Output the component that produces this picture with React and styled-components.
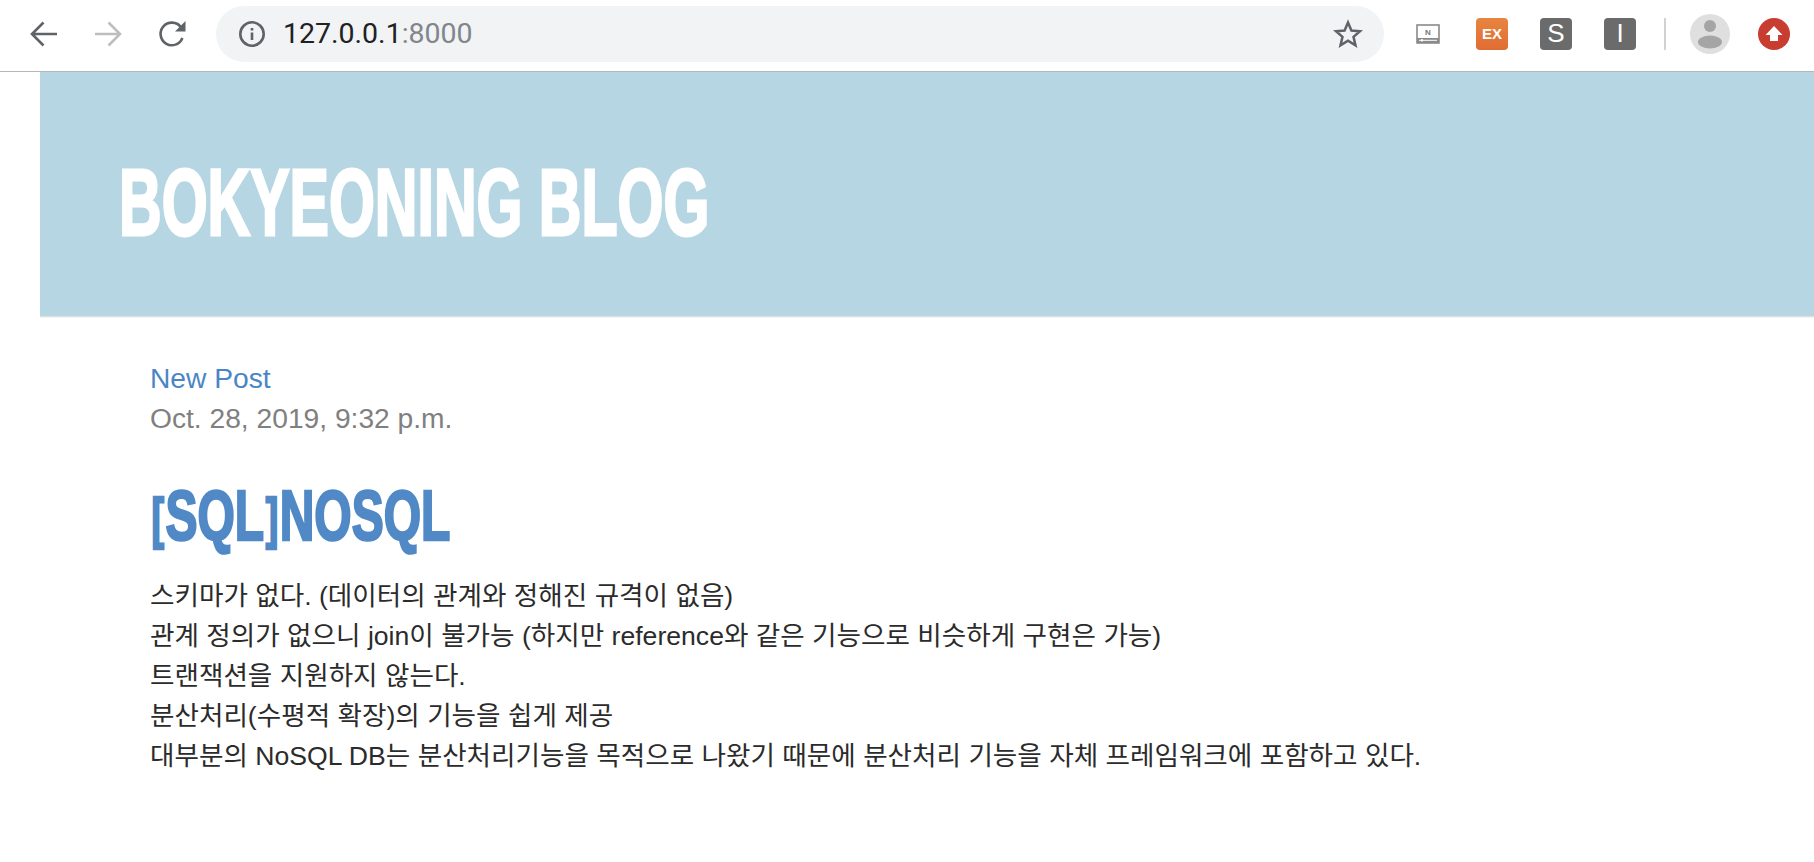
import React from "react";
import styled, { createGlobalStyle, css } from "styled-components";

const GlobalStyle = createGlobalStyle`
	html, body {
		margin: 0;
		padding: 0;
		background: #fff;
	}
	* {
		box-sizing: border-box;
	}
`;

const Toolbar = styled.div`
	height: 72px;
	display: flex;
	align-items: center;
	padding: 0 24px 4px 30px;
	border-bottom: 1px solid #b4b8ba;
	background: #fff;
`;
const NavButton = styled.button`
	width: 28px;
	height: 28px;
	margin-right: 36px;
	padding: 0;
	border: 0;
	background: none;
	display: flex;
	align-items: center;
	justify-content: center;
	flex-shrink: 0;
	color: ${(p) => (p.$disabled ? "#bcbec0" : "#5f6368")};
`;
const UrlBar = styled.div`
	width: 1168px;
	height: 56px;
	flex-shrink: 0;
	margin-left: -6px;
	margin-right: 12px;
	padding: 0 21px 0 22px;
	border-radius: 28px;
	background: #f1f3f4;
	display: flex;
	align-items: center;
`;
const UrlText = styled.div`
	flex: 1;
	margin-left: 17px;
	font: 28.5px "Roboto", "Liberation Sans", sans-serif;
	color: #202124;
`;
const UrlPort = styled.span`
	color: #80868b;
`;
const Extensions = styled.div`
	display: flex;
	align-items: center;
`;
const ExtSlot = styled.div`
	width: 64px;
	display: flex;
	justify-content: center;
`;
const Badge = styled.div`
	width: 32px;
	height: 32px;
	border-radius: 4px;
	background: ${(p) => p.$bg};
	color: #fff;
	display: flex;
	align-items: center;
	justify-content: center;
	font: ${(p) => p.$weight || 400} ${(p) => p.$size || 26}px "Liberation Sans", sans-serif;
`;
const Divider = styled.div`
	width: 2px;
	height: 32px;
	margin: 0 24px 0 12px;
	background: #d0d2d4;
`;
const Avatar = styled.div`
	width: 40px;
	height: 40px;
	margin-right: 28px;
`;

const Header = styled.header`
	height: 245px;
	margin-left: 40px;
	padding: 18px 0 0 79px;
	background: #b5d6e2;
	display: flex;
	align-items: center;
	border-bottom: 1px solid #e0e2e3;
	box-shadow: 0 1px 0 #f2f2f2;
`;

const display = css`
	margin: 0;
	display: block;
	font-family: "Liberation Sans Narrow", "Liberation Sans", sans-serif;
	font-weight: 700;
	text-transform: uppercase;
	white-space: nowrap;
	transform-origin: left center;
`;
const BlogTitle = styled.h1`
	${display}
	font-size: 94px;
	line-height: 100px;
	color: #fff;
	transform: scaleX(0.628);
	-webkit-text-stroke: 3px #fff;
`;
const Main = styled.main`
	padding: 41px 0 0 150px;
`;
const PostLink = styled.a`
	display: block;
	font: 28.2px/40px "Liberation Sans", sans-serif;
	color: #4a86c5;
`;
const PostDate = styled.div`
	font: 28.2px/40px "Liberation Sans", sans-serif;
	color: #808080;
`;
const PostTitle = styled.h2`
	${display}
	margin-top: 43px;
	margin-bottom: 22px;
	font-size: 70px;
	line-height: 70px;
	color: #5089c6;
	transform: scaleX(0.686);
	-webkit-text-stroke: 2.5px #5089c6;
`;
const Bracket = styled.span`
	font-size: 0.78em;
	vertical-align: 0.06em;
	margin: 0 0.04em;
`;
const PostBody = styled.div`
	font: 26.6px/40px "Liberation Sans", "Noto Sans CJK KR", sans-serif;
	color: #2b2b2b;
`;

const ArrowIcon = ({ flip }) => (
	<svg width="28" height="28" viewBox="0 0 28 28" fill="none" stroke="currentColor" strokeWidth="2.6" style={flip ? { transform: "scaleX(-1)" } : undefined}>
		<path d="M27 14H2M13.5 2.5L2 14l11.5 11.5" />
	</svg>
);

const ReloadIcon = () => (
	<svg width="28" height="28" viewBox="0 0 28 28" fill="none">
		<path d="M24.4 18a11.3 11.3 0 1 1-1.6-11" stroke="#5f6368" strokeWidth="2.6" />
		<path d="M27.5 1V11.5H17z" fill="#5f6368" />
	</svg>
);

const InfoIcon = () => (
	<svg width="28" height="28" viewBox="0 0 28 28" fill="none">
		<circle cx="14" cy="14" r="11.7" stroke="#5f6368" strokeWidth="2.6" />
		<path d="M12.7 8h2.6v2.6h-2.6zM12.7 12.6h2.6V20h-2.6z" fill="#5f6368" />
	</svg>
);

const StarIcon = () => (
	<svg width="30" height="30" viewBox="0 0 30 30" fill="none">
		<path d="M15 3.5l3.4 8 8.6.7-6.5 5.7 2 8.4L15 21.8l-7.5 4.5 2-8.4L3 12.2l8.6-.7z" stroke="#5f6368" strokeWidth="2.5" strokeLinejoin="miter" />
	</svg>
);

const NoteIcon = () => (
	<svg width="24" height="20" viewBox="0 0 24 20">
		<rect x="1" y="1" width="22" height="18" fill="#fff" stroke="#8a8a8a" strokeWidth="1.6" />
		<path d="M1 14h22v5H1z" fill="#8a8a8a" />
		<path d="M3 16.3h18" stroke="#fff" strokeWidth="1" />
		<rect x="5" y="15.2" width="2" height="2.2" fill="#fff" />
		<text x="12" y="10.5" textAnchor="middle" fontFamily="Liberation Sans" fontSize="8" fontWeight="700" fill="#777">N</text>
	</svg>
);

const AvatarIcon = () => (
	<svg width="40" height="40" viewBox="0 0 40 40">
		<circle cx="20" cy="20" r="20" fill="#dfdfdf" />
		<circle cx="20" cy="12" r="6" fill="#a5a5a5" />
		<ellipse cx="20" cy="28" rx="12" ry="6.5" fill="#a5a5a5" />
	</svg>
);

const UploadIcon = () => (
	<svg width="32" height="32" viewBox="0 0 32 32">
		<circle cx="16" cy="16" r="16" fill="#c93c30" />
		<path d="M16 8l8.5 9H20v6h-8v-6H7.5z" fill="#fff" />
	</svg>
);

const App = () => {
	return (
		<>
			<GlobalStyle />
			<Toolbar>
				<NavButton>
					<ArrowIcon />
				</NavButton>
				<NavButton $disabled>
					<ArrowIcon flip />
				</NavButton>
				<NavButton>
					<ReloadIcon />
				</NavButton>
				<UrlBar>
					<InfoIcon />
					<UrlText>
						127.0.0.1<UrlPort>:8000</UrlPort>
					</UrlText>
					<StarIcon />
				</UrlBar>
				<Extensions>
					<ExtSlot>
						<NoteIcon />
					</ExtSlot>
					<ExtSlot>
						<Badge $bg="linear-gradient(#e8853f, #e06c34)" $size={15} $weight={700}>EX</Badge>
					</ExtSlot>
					<ExtSlot>
						<Badge $bg="#6b6b6b">S</Badge>
					</ExtSlot>
					<ExtSlot>
						<Badge $bg="#6b6b6b">I</Badge>
					</ExtSlot>
					<Divider />
					<Avatar>
						<AvatarIcon />
					</Avatar>
					<UploadIcon />
				</Extensions>
			</Toolbar>
			<Header>
				<BlogTitle>Bokyeoning Blog</BlogTitle>
			</Header>
			<Main>
				<PostLink>New Post</PostLink>
				<PostDate>Oct. 28, 2019, 9:32 p.m.</PostDate>
				<PostTitle>
					<Bracket>[</Bracket>SQL<Bracket>]</Bracket>NoSQL
				</PostTitle>
				<PostBody>
					스키마가 없다. (데이터의 관계와 정해진 규격이 없음)
					<br />
					관계 정의가 없으니 join이 불가능 (하지만 reference와 같은 기능으로 비슷하게 구현은 가능)
					<br />
					트랜잭션을 지원하지 않는다.
					<br />
					분산처리(수평적 확장)의 기능을 쉽게 제공
					<br />
					대부분의 NoSQL DB는 분산처리기능을 목적으로 나왔기 때문에 분산처리 기능을 자체 프레임워크에 포함하고 있다.
				</PostBody>
			</Main>
		</>
	);
};

export default App;
